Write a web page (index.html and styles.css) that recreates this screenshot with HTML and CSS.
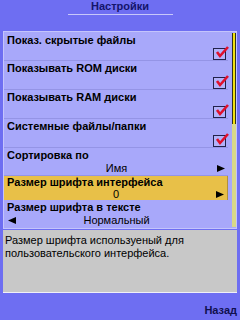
FILE: index.html
```html
<!DOCTYPE html>
<html lang="ru">
<head>
    <meta charset="UTF-8">
    <meta name="viewport" content="width=device-width, initial-scale=1.0">
    <title>Настройки</title>
    <link rel="stylesheet" href="styles.css">
</head>
<body>

<div class="screen">
    <div class="title"><span>Настройки</span></div>

    <div class="list">
        <div class="rows">
            <div class="row first">
                <div class="label">Показ. скрытые файлы</div>
                <div class="line"><span class="check"><svg width="15" height="14" viewBox="0 0 15 14"><path d="M3 6 L6 10 L14 1" fill="none" stroke="#e0102c" stroke-width="2.6"/></svg></span></div>
            </div>
            <div class="row">
                <div class="label">Показывать ROM диски</div>
                <div class="line"><span class="check"><svg width="15" height="14" viewBox="0 0 15 14"><path d="M3 6 L6 10 L14 1" fill="none" stroke="#e0102c" stroke-width="2.6"/></svg></span></div>
            </div>
            <div class="row">
                <div class="label">Показывать RAM диски</div>
                <div class="line"><span class="check"><svg width="15" height="14" viewBox="0 0 15 14"><path d="M3 6 L6 10 L14 1" fill="none" stroke="#e0102c" stroke-width="2.6"/></svg></span></div>
            </div>
            <div class="row">
                <div class="label">Системные файлы/папки</div>
                <div class="line"><span class="check"><svg width="15" height="14" viewBox="0 0 15 14"><path d="M3 6 L6 10 L14 1" fill="none" stroke="#e0102c" stroke-width="2.6"/></svg></span></div>
            </div>
            <div class="row sort">
                <div class="label">Сортировка по</div>
                <div class="line value">
                    <span class="arrow"></span>
                    <span>Имя</span>
                    <span class="arrow"><svg width="8" height="7" viewBox="0 0 8 7"><polygon points="0,0 8,3.5 0,7" fill="#000"/></svg></span>
                </div>
            </div>
            <div class="row selected">
                <div class="label">Размер шрифта интерфейса</div>
                <div class="line value">
                    <span class="arrow"></span>
                    <span>0</span>
                    <span class="arrow"><svg width="8" height="7" viewBox="0 0 8 7"><polygon points="0,0 8,3.5 0,7" fill="#000"/></svg></span>
                </div>
            </div>
            <div class="row last">
                <div class="label">Размер шрифта в тексте</div>
                <div class="line value">
                    <span class="arrow"><svg width="8" height="7" viewBox="0 0 8 7"><polygon points="8,0 0,3.5 8,7" fill="#000"/></svg></span>
                    <span>Нормальный</span>
                    <span class="arrow"></span>
                </div>
            </div>
        </div>
        <div class="scrollbar">
            <div class="thumb"></div>
        </div>
    </div>

    <div class="info">Размер шрифта используеный для пользовательского интерфейса.</div>

    <div class="softkeys"><span>Назад</span></div>
</div>

</body>
</html>
```

FILE: styles.css
```css
body {
    margin: 0;
    padding: 0;
    background-color: #6e6ef2;
    font-family: "Liberation Sans", Arial, sans-serif;
    font-size: 11px;
    color: #000;
}
.screen {
    width: 240px;
    height: 320px;
    display: flex;
    flex-direction: column;
    overflow: hidden;
}
.title {
    height: 31px;
    text-align: center;
    font-weight: bold;
    color: #14146a;
    line-height: 13px;
    box-sizing: border-box;
}
.title span {
    display: inline-block;
    width: 105px;
    padding-bottom: 1px;
    border-bottom: 1px solid #c8c8fa;
}
.list {
    height: 198px;
    margin: 0 3px;
    box-sizing: border-box;
    border: 1px solid #c4c4fc;
    background-color: #a8a8fa;
    display: flex;
}
.rows {
    width: 225px;
}
.row {
    height: 28px;
    border-bottom: 1px solid #9494e6;
    padding-left: 3px;
}
.row.sort {
    height: 27px;
}
.row.selected {
    height: 24px;
    background-color: #e8c048;
    border-right: 1px solid #b09040;
    border-bottom: none;
}
.row.last {
    border-bottom: none;
}
.label {
    font-weight: bold;
    line-height: 13px;
    padding-top: 1px;
    white-space: nowrap;
}
.row.first .label {
    padding-top: 2px;
}
.row.selected .label {
    line-height: 12px;
    padding-top: 0;
}
.line {
    height: 14px;
    display: flex;
    justify-content: flex-end;
    align-items: flex-end;
    padding-right: 2px;
}
.row.first .line {
    height: 13px;
}
.check {
    width: 11px;
    height: 10px;
    border: 1px solid #22224a;
    background-color: #b2b2fa;
    position: relative;
}
.check svg {
    position: absolute;
    left: 0;
    top: -3px;
}
.value {
    justify-content: space-between;
    align-items: center;
    height: 13px;
    line-height: 13px;
    padding-left: 1px;
    padding-right: 3px;
}
.row.sort .value {
    height: 12px;
    line-height: 12px;
}
.row.selected .value {
    height: 12px;
    line-height: 12px;
}
.arrow {
    width: 8px;
    height: 7px;
    display: flex;
}
.scrollbar {
    width: 4px;
    margin: 1px 0 1px 4px;
    background-color: #d8d888;
    display: flex;
    flex-direction: column;
}
.thumb {
    height: 91px;
    box-sizing: border-box;
    border-left: 1px solid #303018;
    border-right: 1px solid #303018;
    background-color: #f0e010;
}
.info {
    height: 63px;
    margin: 1px 3px 0 3px;
    box-sizing: border-box;
    padding: 4px 2px 0 2px;
    background-color: #c8c8c8;
    border-bottom: 1px solid #f0f0f8;
    line-height: 13px;
}
.softkeys {
    flex: 1;
    display: flex;
    justify-content: flex-end;
    align-items: flex-end;
    padding: 0 3px 3px 0;
    font-weight: bold;
    color: #10104e;
    line-height: 13px;
}
```
